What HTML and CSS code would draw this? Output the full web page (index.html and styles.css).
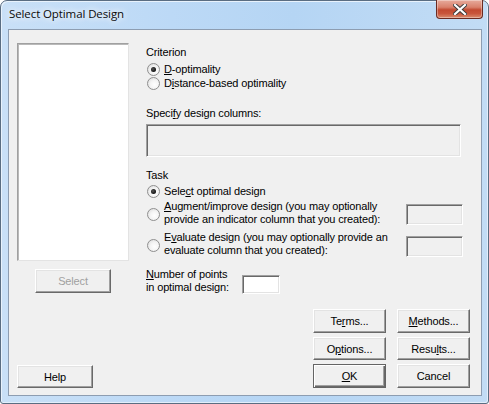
FILE: index.html
```html
<!DOCTYPE html>
<html>
<head>
<meta charset="utf-8">
<link rel="stylesheet" href="styles.css">
</head>
<body>
<div class="window">
  <div class="titlebar">
    <span class="title">Select Optimal Design</span>
    <div class="close">
      <svg width="14" height="11" viewBox="0 0 14 11">
        <path d="M2 1 L12 10 M12 1 L2 10" stroke="#3a3a3a" stroke-width="4" stroke-linecap="square"/>
        <path d="M2 1 L12 10 M12 1 L2 10" stroke="#ffffff" stroke-width="2.2" stroke-linecap="square"/>
      </svg>
    </div>
  </div>
  <div class="client">
    <div class="top">
      <div class="leftcol">
        <div class="listbox"></div>
        <div class="btn disabled select-btn">Select</div>
      </div>
      <div class="rightcol">
        <div class="label crit">Criterion</div>
        <div class="radio-row r1"><span class="radio on"></span><span><u>D</u>-optimality</span></div>
        <div class="radio-row"><span class="radio"></span><span>D<u>i</u>stance-based optimality</span></div>
        <div class="label spec">Speci<u>f</u>y design columns:</div>
        <div class="field wide"></div>
        <div class="label task">Task</div>
        <div class="radio-row r3"><span class="radio on"></span><span>Sele<u>c</u>t optimal design</span></div>
        <div class="multi-row aug">
          <span class="radio"></span>
          <span class="mtext"><u>A</u>ugment/improve design (you may optionally<br>provide an indicator column that you created):</span>
          <div class="field small"></div>
        </div>
        <div class="multi-row eval">
          <span class="radio"></span>
          <span class="mtext">E<u>v</u>aluate design (you may optionally provide an<br>evaluate column that you created):</span>
          <div class="field small"></div>
        </div>
        <div class="num-row">
          <span class="ntext"><u>N</u>umber of points<br>in optimal design:</span>
          <div class="field num"></div>
        </div>
      </div>
    </div>
    <div class="buttons">
      <div class="btn b1">Te<u>r</u>ms...</div>
      <div class="btn b2"><u>M</u>ethods...</div>
      <div class="btn b3">O<u>p</u>tions...</div>
      <div class="btn b4">Resu<u>l</u>ts...</div>
      <div class="btn help">Help</div>
      <div class="btn default b5"><u>O</u>K</div>
      <div class="btn b6">Cancel</div>
    </div>
  </div>
</div>
</body>
</html>
```
FILE: styles.css
```css
html, body {
  margin: 0;
  padding: 0;
  background: #ffffff;
}
body {
  font-family: "Liberation Sans", Arial, sans-serif;
  font-size: 11px;
  letter-spacing: -0.15px;
  color: #000;
}
u { text-decoration: underline; text-underline-offset: 1px; }

.window {
  width: 489px;
  height: 404px;
  box-sizing: border-box;
  border: 1px solid #5a6d82;
  border-radius: 7px 7px 3px 3px;
  background: linear-gradient(90deg, #c9e0f7 0%, #bcd9f6 35%, #b5d5f4 60%, #c2dcf5 100%);
  padding: 0 6px 7px 7px;
  display: flex;
  flex-direction: column;
  box-shadow: inset 1px 1px 0 #e8f2fc, inset -1px -1px 0 #e2eefa;
}
.titlebar {
  height: 28px;
  display: flex;
  align-items: flex-start;
  position: relative;
}
.title {
  font-family: "Open Sans", "Noto Sans", sans-serif;
  font-size: 11.5px;
  margin-top: 5px;
  margin-left: 1px;
  color: #0a0a0a;
  text-shadow: 0 0 6px #ffffff, 0 0 8px #ffffff;
  letter-spacing: -0.1px;
}
.close {
  margin-left: auto;
  margin-top: -1px;
  margin-right: -1px;
  width: 47px;
  height: 19px;
  box-sizing: border-box;
  border: 1px solid #6b2b22;
  border-top: none;
  border-radius: 0 0 4px 4px;
  background: linear-gradient(180deg, #e7ab9c 0%, #d9816c 40%, #c24a31 55%, #c8553b 75%, #d98c6e 100%);
  display: flex;
  align-items: center;
  justify-content: center;
  box-shadow: inset 0 0 0 1px rgba(255,255,255,0.35);
}

.client {
  flex: 1;
  background: #f0f0f0;
  border: 1px solid #8d9db1;
  display: flex;
  flex-direction: column;
}
.top {
  display: flex;
}
.leftcol {
  display: flex;
  flex-direction: column;
  margin-left: 8px;
  margin-top: 13px;
  width: 112px;
}
.listbox {
  width: 112px;
  height: 218px;
  box-sizing: border-box;
  background: #fff;
  border: 1px solid;
  border-color: #a0a0a0 #e3e3e3 #e3e3e3 #a0a0a0;
  box-shadow: inset 1px 1px 0 #b9b9b9;
}
.select-btn {
  margin-top: 8px;
  margin-left: 18px;
  width: 76px;
  height: 24px;
}

.rightcol {
  margin-left: 17px;
  width: 317px;
  display: flex;
  flex-direction: column;
}
.label {
  height: 13px;
  line-height: 13px;
}
.crit { margin-top: 16px; }
.spec { margin-top: 17px; }
.task { margin-top: 12px; }

.radio-row {
  display: flex;
  align-items: center;
  height: 14px;
  line-height: 13px;
}
.r1 { margin-top: 3px; }
.r3 { margin-top: 2px; }
.radio {
  width: 13px;
  height: 13px;
  box-sizing: border-box;
  border-radius: 50%;
  border: 1px solid #8f8f8f;
  background: radial-gradient(circle at 60% 60%, #ffffff 0%, #f4f4f4 45%, #d6d6d6 100%);
  margin-left: 1px;
  margin-right: 4px;
  flex: none;
  display: flex;
  align-items: center;
  justify-content: center;
}
.radio.on::after {
  content: "";
  width: 5px;
  height: 5px;
  border-radius: 50%;
  background: radial-gradient(circle at 40% 40%, #555 0%, #111 70%);
}

.field {
  box-sizing: border-box;
  border: 1px solid;
  border-color: #a0a0a0 #ffffff #ffffff #a0a0a0;
  box-shadow: inset 1px 1px 0 #696969, inset -1px -1px 0 #e3e3e3;
  background: #f0f0f0;
}
.wide {
  width: 315px;
  height: 33px;
  margin-top: 4px;
}
.multi-row {
  display: flex;
  align-items: center;
  height: 26px;
  line-height: 13px;
}
.aug { margin-top: 2px; }
.eval { margin-top: 5px; }
.mtext { flex: 1; }
.small {
  width: 57px;
  height: 21px;
  flex: none;
}
.aug .small { margin-top: 2px; }
.eval .small { margin-top: 4px; }
.aug .radio, .eval .radio { margin-top: 2px; }

.num-row {
  display: flex;
  align-items: flex-start;
  margin-top: 11px;
  line-height: 13px;
}
.ntext { width: 96px; }
.num {
  width: 38px;
  height: 19px;
  background: #ffffff;
  margin-top: 7px;
}

.buttons {
  display: grid;
  grid-template-columns: 76px 1fr 73px 73px;
  grid-template-rows: 24px 23px 24px;
  column-gap: 11px;
  row-gap: 4px;
  margin: 15px 11px 0 8px;
}
.b1 { grid-column: 3; grid-row: 1; }
.b2 { grid-column: 4; grid-row: 1; }
.b3 { grid-column: 3; grid-row: 2; }
.b4 { grid-column: 4; grid-row: 2; }
.help { grid-column: 1; grid-row: 3; height: 23px; margin-top: 1px; }
.b5 { grid-column: 3; grid-row: 3; }
.b6 { grid-column: 4; grid-row: 3; }

.btn {
  box-sizing: border-box;
  background: #f0f0f0;
  border: 1px solid;
  border-color: #ffffff #696969 #696969 #ffffff;
  box-shadow: inset -1px -1px 0 #a0a0a0, inset 1px 1px 0 #e3e3e3;
  display: flex;
  align-items: center;
  justify-content: center;
  color: #000;
}
.btn.disabled {
  color: #a0a0a0;
}
.btn.default {
  border: 1px solid #646464;
  box-shadow: inset 1px 1px 0 #ffffff, inset -1px -1px 0 #696969, inset -2px -2px 0 #a0a0a0;
}
```
